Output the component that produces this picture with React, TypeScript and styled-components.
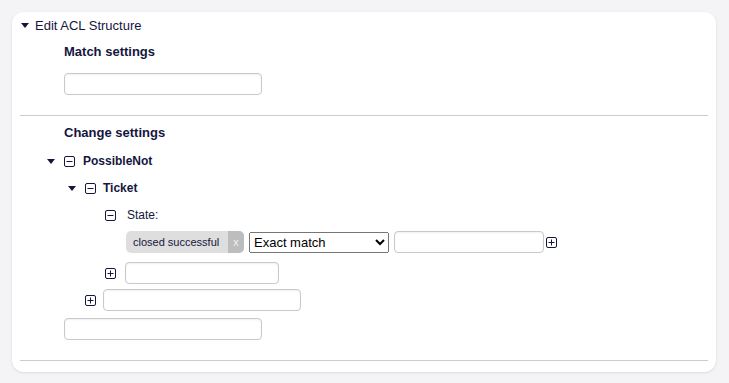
import React from 'react'
import styled, { createGlobalStyle } from 'styled-components'

const GlobalStyle = createGlobalStyle`
  html, body {
    margin: 0;
    padding: 0;
    background: #f4f4f6;
  }
  body {
    font-family: "Liberation Sans", Arial, sans-serif;
    color: #14163d;
  }
`

const Caret = () => (
  <CaretBox>
    <svg width="8" height="5" viewBox="0 0 8 5">
      <path d="M0 0 H8 L4 5 Z" fill="#14163d" />
    </svg>
  </CaretBox>
)

const SignBox = ({ plus }: { plus?: boolean }) => (
  <svg width="11" height="11" viewBox="0 0 11 11">
    <rect x="0.5" y="0.5" width="10" height="10" rx="1.5" fill="none" stroke="#14163d" />
    <path d="M2.5 5.5 H8.5" stroke="#14163d" />
    {plus && <path d="M5.5 2.5 V8.5" stroke="#14163d" />}
  </svg>
)

const App = () => {
  return (
    <>
      <GlobalStyle />
      <Page>
        <Card>
          <Header>
            <Caret />
            <span>Edit ACL Structure</span>
          </Header>

          <Section top="6px">
            <Heading>Match settings</Heading>
            <Input w="198px" mt="13px" />
          </Section>

          <Divider />

          <Section top="9px">
            <Heading>Change settings</Heading>

            <Node mt="12px">
              <NodeRow>
                <Caret />
                <SignBox />
                <Label gap="8px">PossibleNot</Label>
              </NodeRow>

              <Children indent="21px">
                <Node mt="11px">
                  <NodeRow>
                    <Caret />
                    <SignBox />
                    <Label gap="7px">Ticket</Label>
                  </NodeRow>

                  <Children indent="20px">
                    <Node mt="11px">
                      <NodeRow>
                        <SignBox />
                        <Label gap="11px" normal>State:</Label>
                      </NodeRow>
                      <ValueRow indent="21px" mt="8px">
                        <Tag>
                          <TagText>closed successful</TagText>
                          <TagRemove>x</TagRemove>
                        </Tag>
                        <Select defaultValue="Exact match">
                          <option>Exact match</option>
                          <option>Regular expression</option>
                          <option>Negated exact match</option>
                        </Select>
                        <Input w="150px" />
                        <PlusAfter>
                          <SignBox plus />
                        </PlusAfter>
                      </ValueRow>
                    </Node>

                    <AddRow mt="9px" gap="9px">
                      <SignBox plus />
                      <Input w="154px" />
                    </AddRow>
                  </Children>

                  <AddRow mt="5px" gap="7px">
                    <SignBox plus />
                    <Input w="198px" />
                  </AddRow>
                </Node>
              </Children>

              <AddRow mt="7px" gap="0px">
                <Input w="198px" />
              </AddRow>
            </Node>
          </Section>

          <Divider />
        </Card>
      </Page>
    </>
  )
}

export default App

const Page = styled.div`
  padding: 12px 13px 11px 12px;
`

const Card = styled.div`
  background: #ffffff;
  border-radius: 12px;
  box-shadow: 0 1px 3px rgba(20, 22, 61, 0.1);
  padding: 0 8px 11px 8px;
`

const Header = styled.div`
  height: 26px;
  display: flex;
  align-items: center;
  padding-left: 1px;
  font-size: 13px;
  span {
    margin-left: 6px;
  }
`

const CaretBox = styled.div`
  width: 8px;
  height: 5px;
  display: flex;
  svg {
    display: block;
  }
`

const Section = styled.div<{ top: string }>`
  padding: ${({ top }) => top} 0 20px 44px;
  display: flex;
  flex-direction: column;
  align-items: flex-start;
`

const Heading = styled.div`
  font-size: 13px;
  font-weight: 700;
  line-height: 16px;
`

const Divider = styled.div`
  height: 1px;
  background: #cccccc;
`

const Input = styled.input<{ w: string; mt?: string }>`
  box-sizing: border-box;
  width: ${({ w }) => w};
  height: 22px;
  margin: ${({ mt }) => mt || '0'} 0 0 0;
  border: 1px solid #c9c9c9;
  border-radius: 4px;
  background: #fff;
  box-shadow: inset 0 1px 2px rgba(0, 0, 0, 0.06);
  outline: none;
  padding: 0 6px;
  font-family: "Liberation Sans", Arial, sans-serif;
  font-size: 12px;
`

const Node = styled.div<{ mt: string }>`
  margin-top: ${({ mt }) => mt};
  display: flex;
  flex-direction: column;
`

const NodeRow = styled.div`
  display: flex;
  align-items: center;
  height: 16px;
  ${CaretBox} {
    margin-left: -17px;
    margin-right: 9px;
  }
  svg {
    display: block;
  }
`

const Label = styled.span<{ gap: string; normal?: boolean }>`
  margin-left: ${({ gap }) => gap};
  font-size: 12px;
  font-weight: ${({ normal }) => (normal ? 400 : 700)};
  line-height: 16px;
`

const Children = styled.div<{ indent: string }>`
  margin-left: ${({ indent }) => indent};
  display: flex;
  flex-direction: column;
`

const ValueRow = styled.div<{ indent: string; mt: string }>`
  margin: ${({ mt }) => mt} 0 0 ${({ indent }) => indent};
  display: flex;
  align-items: center;
  gap: 5px;
`

const Tag = styled.div`
  display: flex;
  height: 22px;
  border-radius: 5px;
  overflow: hidden;
  background: #dedede;
  font-size: 11px;
`

const TagText = styled.span`
  display: flex;
  align-items: center;
  padding: 0 7px 0 7px;
  width: 88px;
  color: #14163d;
`

const TagRemove = styled.span`
  display: flex;
  align-items: center;
  justify-content: center;
  width: 16px;
  background: #bdbdbd;
  color: #f2f2f2;
`

const Select = styled.select`
  width: 140px;
  height: 21px;
  font-family: "Liberation Sans", Arial, sans-serif;
  font-size: 13px;
  color: #000;
`

const PlusAfter = styled.div`
  margin-left: -3px;
  display: flex;
  svg {
    display: block;
  }
`

const AddRow = styled.div<{ mt: string; gap: string }>`
  margin-top: ${({ mt }) => mt};
  display: flex;
  align-items: center;
  gap: ${({ gap }) => gap};
  svg {
    display: block;
  }
`
